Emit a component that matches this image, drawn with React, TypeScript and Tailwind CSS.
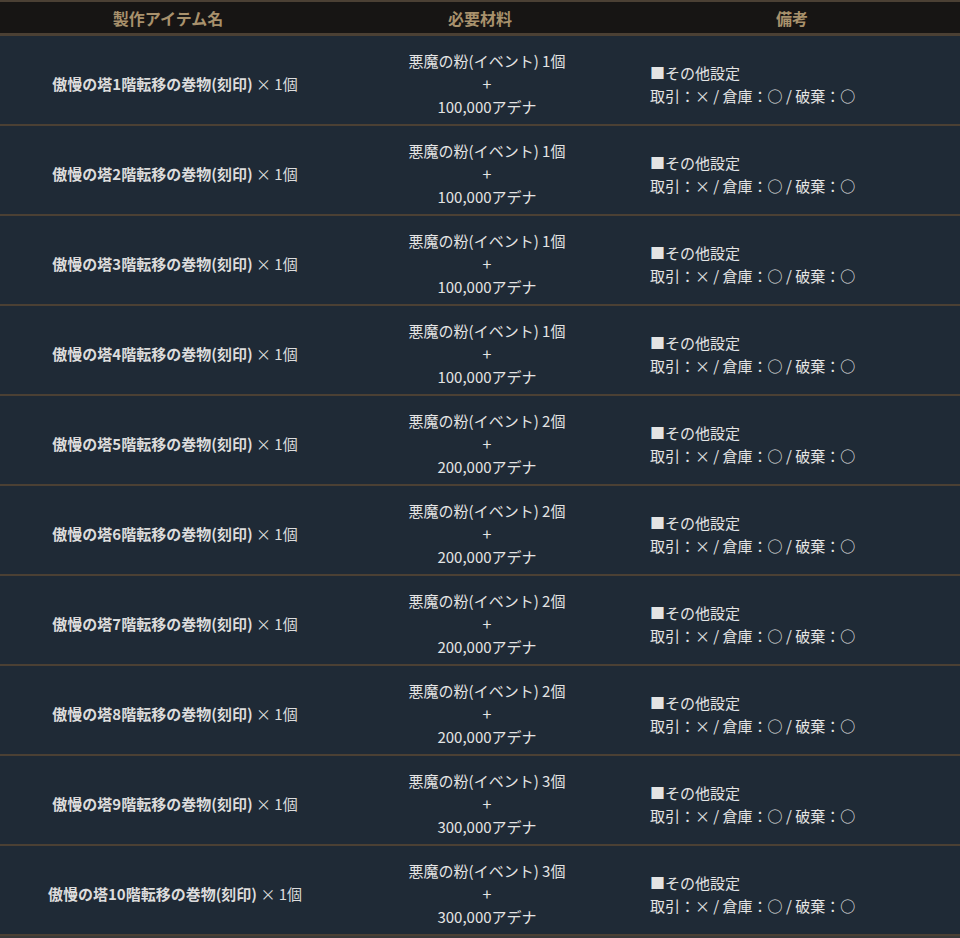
const rows = [1, 2, 3, 4, 5, 6, 7, 8, 9, 10].map((n) => {
  const qty = n <= 4 ? 1 : n <= 8 ? 2 : 3;
  return {
    floor: n,
    qty,
    adena: `${qty}00,000`,
  };
});

export default function App() {
  return (
    <div
      className="w-[960px] bg-[#1f2a36] text-[15px] text-[#e4e4e4]"
      style={{ fontFamily: '"Noto Sans CJK JP", "Noto Sans", sans-serif' }}
    >
      {/* Header */}
      <div className="grid grid-cols-[336px_288px_336px] border-t-2 border-b-[3px] border-[#4b4034] bg-[#171514] h-[36px] items-center text-[16px] font-bold text-[#a8916c]">
        <div className="text-center">製作アイテム名</div>
        <div className="text-center">必要材料</div>
        <div className="text-center">備考</div>
      </div>

      {rows.map((r) => (
        <div
          key={r.floor}
          className="grid grid-cols-[336px_288px_336px] h-[90px] border-b-2 border-[#4b4034] items-center pt-[7px] leading-[23px]"
        >
          <div className="text-center pl-[14px] font-bold text-[#dcdcdc]">
            傲慢の塔{r.floor}階転移の巻物(刻印) <span className="font-normal">× 1個</span>
          </div>
          <div className="text-center pl-[14px]">
            <div>悪魔の粉(イベント) {r.qty}個</div>
            <div className="text-[16px]">+</div>
            <div>{r.adena}アデナ</div>
          </div>
          <div className="pl-[26px]">
            <div>■その他設定</div>
            <div>取引：× / 倉庫：○ / 破棄：○</div>
          </div>
        </div>
      ))}
      <div className="h-[2px] bg-[#3a3a3a]" />
    </div>
  );
}
